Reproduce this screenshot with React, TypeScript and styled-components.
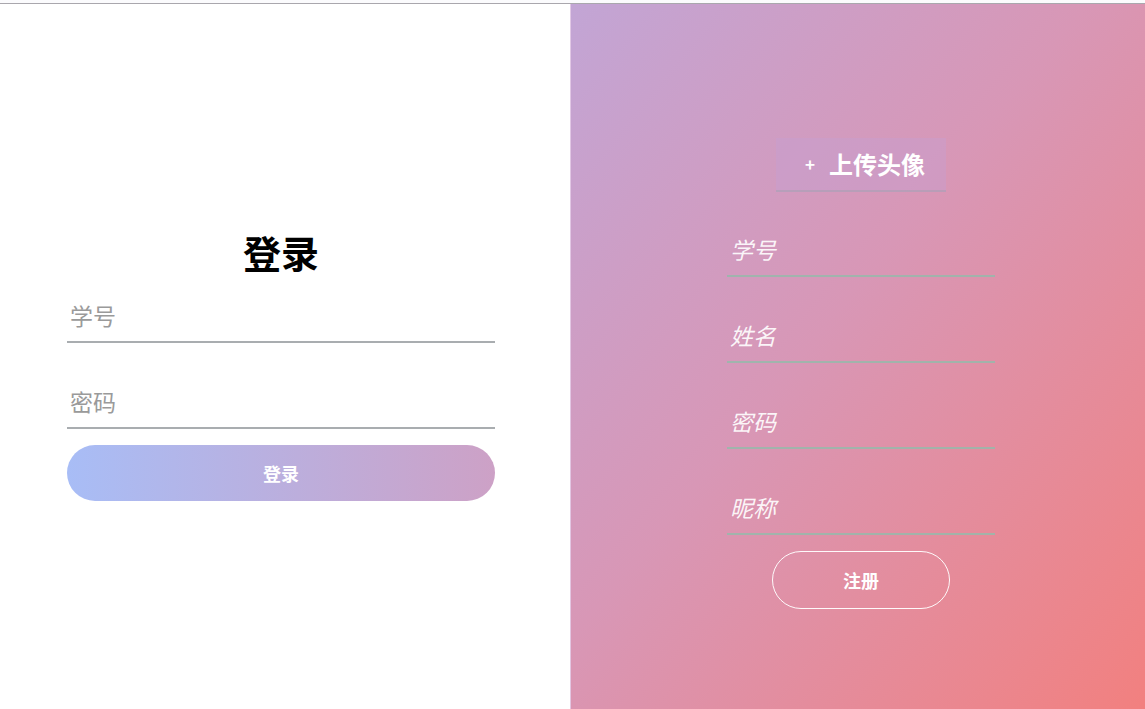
import React from "react";
import styled, { createGlobalStyle } from "styled-components";

const GlobalStyle = createGlobalStyle`
  html, body { margin: 0; padding: 0; background: #fff; }
  body { font-family: "Noto Sans CJK SC", "Noto Sans", sans-serif; }
  * { box-sizing: border-box; }
`;

const Frame = styled.div`
  padding-top: 3px;
  background: #fbfbfd;
`;

const Page = styled.main`
  display: flex;
  height: 706px;
  border-top: 1px solid #a9a7ad;
  overflow: hidden;
`;

const LoginPanel = styled.section`
  width: 570px;
  background: #fff;
  display: flex;
  flex-direction: column;
  align-items: center;
  padding-top: 223px;
  padding-right: 8px;
`;

const RegisterPanel = styled.section`
  flex: 1;
  background: linear-gradient(to bottom right, #c2a5d5 0%, #d897b6 45%, #f2807f 100%);
  border-left: 1px solid rgba(225, 205, 235, 0.9);
  display: flex;
  flex-direction: column;
  align-items: center;
  padding-top: 134px;
  padding-left: 6px;
`;

const Form = styled.form<{ $width: number }>`
  width: ${(p) => p.$width}px;
  display: flex;
  flex-direction: column;
  align-items: center;
`;

const Title = styled.h1`
  margin: 0 0 14px;
  height: 50px;
  line-height: 50px;
  font-size: 38px;
  font-weight: 700;
  color: #000;
`;

const Field = styled.input<{ $light?: boolean; $gap: number }>`
  width: 100%;
  height: 52px;
  margin-bottom: ${(p) => p.$gap}px;
  padding: 0 0 3px 3px;
  border: none;
  border-bottom: 2px solid ${(p) => (p.$light ? "rgba(150, 185, 170, 0.85)" : "#a9adb0")};
  background: transparent;
  outline: none;
  font-family: inherit;
  font-size: 23px;
  font-style: ${(p) => (p.$light ? "italic" : "normal")};
  color: ${(p) => (p.$light ? "#fff" : "#333")};
  &::placeholder {
    color: ${(p) => (p.$light ? "rgba(255, 255, 255, 0.92)" : "#9a9a9a")};
  }
`;

const LoginButton = styled.button`
  width: 100%;
  height: 56px;
  border: none;
  border-radius: 28px;
  background: linear-gradient(to right, #a8bdf6, #cda1c6);
  color: #fff;
  font-family: inherit;
  font-size: 18px;
  font-weight: 700;
  cursor: pointer;
`;

const UploadButton = styled.button`
  width: 170px;
  height: 54px;
  margin-bottom: 33px;
  display: flex;
  align-items: center;
  justify-content: center;
  gap: 14px;
  border: none;
  border-bottom: 2px solid rgba(165, 160, 175, 0.55);
  background: rgba(196, 160, 215, 0.35);
  color: #fff;
  font-family: inherit;
  font-size: 24px;
  font-weight: 700;
  cursor: pointer;
  padding: 0 0 2px 8px;
`;

const Plus = styled.span`
  font-size: 17px;
  font-weight: 700;
`;

const RegisterButton = styled.button`
  width: 178px;
  height: 58px;
  border: 1px solid rgba(255, 255, 255, 0.95);
  border-radius: 29px;
  background: transparent;
  color: #fff;
  font-family: inherit;
  font-size: 18px;
  font-weight: 700;
  cursor: pointer;
`;

export default function App() {
  return (
    <Frame>
      <GlobalStyle />
      <Page>
        <LoginPanel>
          <Form $width={428} onSubmit={(e) => e.preventDefault()}>
            <Title>登录</Title>
            <Field $gap={34} placeholder="学号" />
            <Field $gap={16} type="password" placeholder="密码" />
            <LoginButton type="submit">登录</LoginButton>
          </Form>
        </LoginPanel>
        <RegisterPanel>
          <UploadButton type="button">
            <Plus>+</Plus>
            <span>上传头像</span>
          </UploadButton>
          <Form $width={268} onSubmit={(e) => e.preventDefault()}>
            <Field $light $gap={34} placeholder="学号" />
            <Field $light $gap={34} placeholder="姓名" />
            <Field $light $gap={34} type="password" placeholder="密码" />
            <Field $light $gap={16} placeholder="昵称" />
            <RegisterButton type="submit">注册</RegisterButton>
          </Form>
        </RegisterPanel>
      </Page>
    </Frame>
  );
}
